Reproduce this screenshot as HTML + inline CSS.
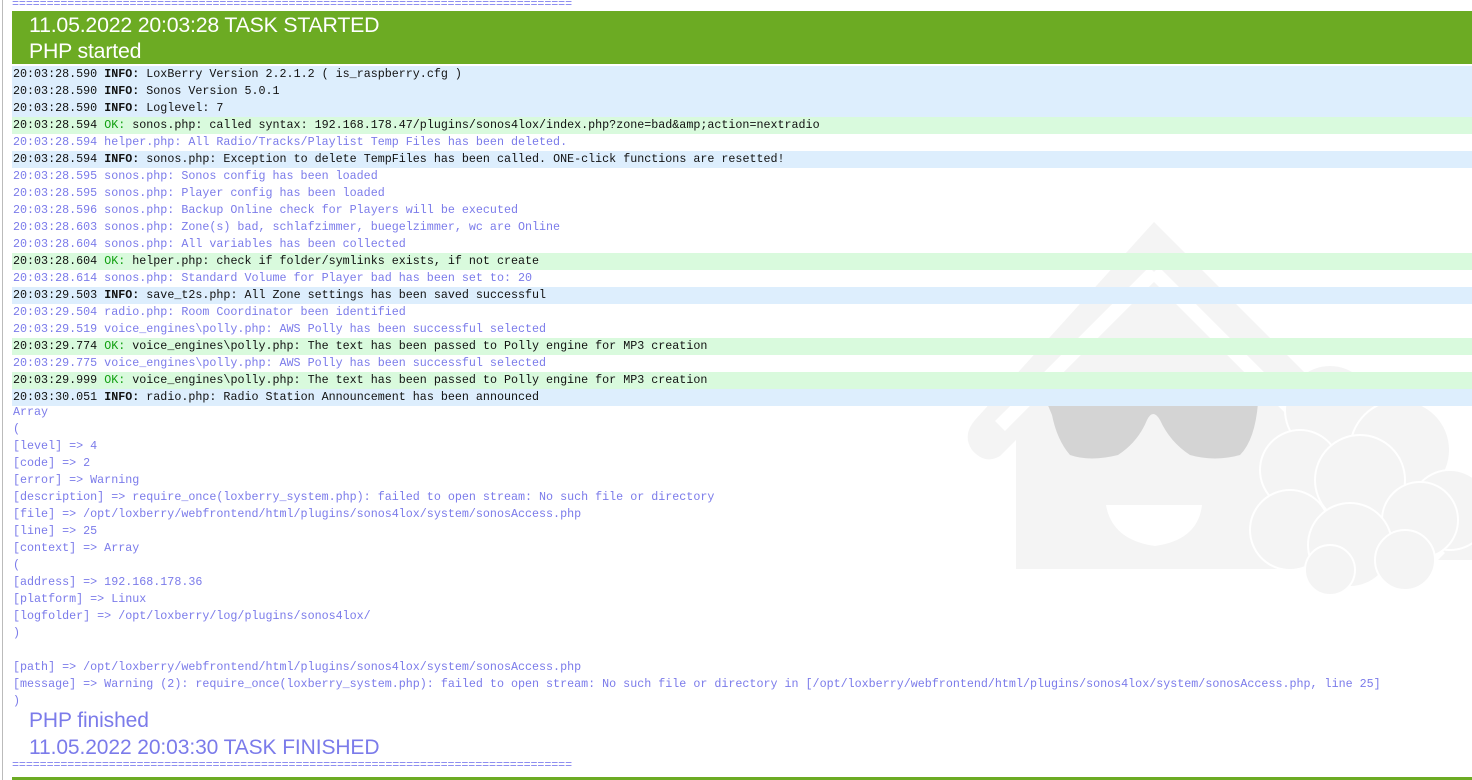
<!DOCTYPE html>
<html><head><meta charset="utf-8"><style>
html,body{margin:0;padding:0;width:1472px;height:780px;overflow:hidden;background:#fff;}
body{position:relative;font-family:"Liberation Mono","DejaVu Sans Mono",monospace;font-size:11.7px;}
.bl{position:absolute;left:2px;top:0;width:1px;height:780px;background:#bbb;}
.logo{position:absolute;left:0;top:0;z-index:0}
.wrap{position:absolute;left:12px;top:0;width:1460px;z-index:1}
.eq{color:#8080ee;height:11px;line-height:8px;font-size:11.7px;letter-spacing:-0.1px;overflow:hidden;white-space:pre}
.hdr{background:#6cab23;color:#fff;font-family:"Liberation Sans",sans-serif;font-size:21.3px;height:53px;padding-left:17px;line-height:26px;letter-spacing:-0.2px;padding-top:0}
.hdr span{display:block;position:relative;top:1px}
.r{height:17px;line-height:17px;white-space:pre;padding-left:1px;color:#7b7bea}
.i{background:#ddeefd;color:#111}
.o{background:#d9fadd;color:#111}
.i b{font-weight:bold;color:#111}
.o b{font-weight:normal;color:#11a011}
.ft{font-family:"Liberation Sans",sans-serif;font-size:21px;color:#7b7bea;padding-left:17px;letter-spacing:-0.1px}
</style></head><body>
<div class="bl"></div>
<svg class="logo" width="1472" height="780">
<g fill="#f4f4f4">
<path d="M1154 222 L1472 540 L1472 560 L1300 560 L1300 569 L1016 569 L1016 440 L1000 456 Q985 465 972 450 Q962 435 975 420 Z"/>
</g>
<path d="M1154 272 L1440 558 M1154 272 L1000 426" stroke="#fff" stroke-width="14" fill="none"/>
<path d="M1047 403 L1258 403 Q1255 440 1240 455 Q1215 462 1190 455 Q1170 442 1160 420 Q1153 408 1147 420 Q1138 442 1118 455 Q1090 462 1070 455 Q1057 440 1052 415 Z" fill="#d4d4d4"/>
<path d="M1106 505 L1202 505 Q1198 540 1155 546 Q1112 540 1106 505 Z" fill="#fff"/>
<g fill="#f4f4f4" stroke="#fff" stroke-width="2">
<circle cx="1330" cy="410" r="45"/><circle cx="1400" cy="450" r="50"/><circle cx="1450" cy="510" r="40"/>
<circle cx="1300" cy="470" r="40"/><circle cx="1360" cy="480" r="45"/><circle cx="1420" cy="520" r="38"/>
<circle cx="1290" cy="530" r="40"/><circle cx="1350" cy="545" r="42"/><circle cx="1405" cy="560" r="30"/>
<circle cx="1330" cy="570" r="25"/>
</g>
</svg>
<div class="wrap">
<div class="eq">=================================================================================</div>
<div class="hdr"><span>11.05.2022 20:03:28 TASK STARTED<br>PHP started</span></div>
<div style="height:2px"></div>
<div class="r i">20:03:28.590 <b>INFO:</b> LoxBerry Version 2.2.1.2 ( is_raspberry.cfg )</div>
<div class="r i">20:03:28.590 <b>INFO:</b> Sonos Version 5.0.1</div>
<div class="r i">20:03:28.590 <b>INFO:</b> Loglevel: 7</div>
<div class="r o">20:03:28.594 <b>OK:</b> sonos.php: called syntax: 192.168.178.47/plugins/sonos4lox/index.php?zone=bad&amp;amp;action=nextradio</div>
<div class="r">20:03:28.594 helper.php: All Radio/Tracks/Playlist Temp Files has been deleted.</div>
<div class="r i">20:03:28.594 <b>INFO:</b> sonos.php: Exception to delete TempFiles has been called. ONE-click functions are resetted!</div>
<div class="r">20:03:28.595 sonos.php: Sonos config has been loaded</div>
<div class="r">20:03:28.595 sonos.php: Player config has been loaded</div>
<div class="r">20:03:28.596 sonos.php: Backup Online check for Players will be executed</div>
<div class="r">20:03:28.603 sonos.php: Zone(s) bad, schlafzimmer, buegelzimmer, wc are Online</div>
<div class="r">20:03:28.604 sonos.php: All variables has been collected</div>
<div class="r o">20:03:28.604 <b>OK:</b> helper.php: check if folder/symlinks exists, if not create</div>
<div class="r">20:03:28.614 sonos.php: Standard Volume for Player bad has been set to: 20</div>
<div class="r i">20:03:29.503 <b>INFO:</b> save_t2s.php: All Zone settings has been saved successful</div>
<div class="r">20:03:29.504 radio.php: Room Coordinator been identified</div>
<div class="r">20:03:29.519 voice_engines\polly.php: AWS Polly has been successful selected</div>
<div class="r o">20:03:29.774 <b>OK:</b> voice_engines\polly.php: The text has been passed to Polly engine for MP3 creation</div>
<div class="r">20:03:29.775 voice_engines\polly.php: AWS Polly has been successful selected</div>
<div class="r o">20:03:29.999 <b>OK:</b> voice_engines\polly.php: The text has been passed to Polly engine for MP3 creation</div>
<div class="r i">20:03:30.051 <b>INFO:</b> radio.php: Radio Station Announcement has been announced</div>
<div class="r" style="margin-top:-2px">Array</div>
<div class="r">(</div>
<div class="r">[level] =&gt; 4</div>
<div class="r">[code] =&gt; 2</div>
<div class="r">[error] =&gt; Warning</div>
<div class="r">[description] =&gt; require_once(loxberry_system.php): failed to open stream: No such file or directory</div>
<div class="r">[file] =&gt; /opt/loxberry/webfrontend/html/plugins/sonos4lox/system/sonosAccess.php</div>
<div class="r">[line] =&gt; 25</div>
<div class="r">[context] =&gt; Array</div>
<div class="r">(</div>
<div class="r">[address] =&gt; 192.168.178.36</div>
<div class="r">[platform] =&gt; Linux</div>
<div class="r">[logfolder] =&gt; /opt/loxberry/log/plugins/sonos4lox/</div>
<div class="r">)</div>
<div class="r"> </div>
<div class="r">[path] =&gt; /opt/loxberry/webfrontend/html/plugins/sonos4lox/system/sonosAccess.php</div>
<div class="r">[message] =&gt; Warning (2): require_once(loxberry_system.php): failed to open stream: No such file or directory in [/opt/loxberry/webfrontend/html/plugins/sonos4lox/system/sonosAccess.php, line 25]</div>
<div class="r">)</div>
<div class="ft" style="height:27px;line-height:27px;margin-top:-3px">PHP finished</div>
<div class="ft" style="height:27px;line-height:27px">11.05.2022 20:03:30 TASK FINISHED</div>
<div class="eq">=================================================================================</div>
</div>
<div style="position:absolute;left:12px;top:777px;width:1460px;height:3px;background:#6cab23"></div>
</body></html>
